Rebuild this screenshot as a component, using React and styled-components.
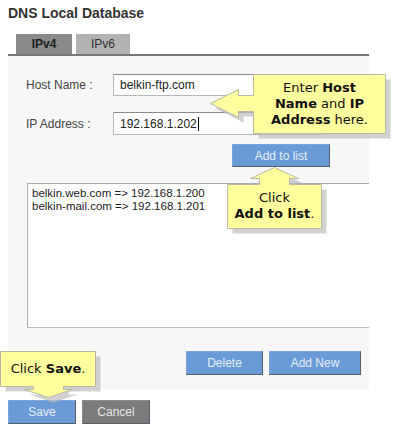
import React from 'react';
import styled, { createGlobalStyle } from 'styled-components';

const GlobalStyle = createGlobalStyle`
    body {
        margin: 0;
        background: #ffffff;
        font-family: 'Liberation Sans', Arial, sans-serif;
    }
`;

// 전체 페이지
const Page = styled.div`
    position: relative;
    box-sizing: border-box;
    width: 393px;
    height: 435px;
    padding-left: 8px;
    overflow: hidden;
    background: #ffffff;
`;

const Title = styled.h1`
    margin: 0;
    padding-top: 5px;
    font-size: 14px;
    line-height: 17px;
    font-weight: bold;
    color: #333333;
`;

// 탭
const TabRow = styled.div`
    display: flex;
    gap: 4px;
    width: 361px;
    margin-top: 12px;
    padding-left: 8px;
    box-sizing: border-box;
    border-bottom: 2px solid #777777;
`;

const Tab = styled.div`
    width: ${p => p.$w}px;
    height: 20px;
    display: flex;
    align-items: center;
    justify-content: center;
    font-size: 12px;
    font-weight: ${p => (p.$active ? 'bold' : 'normal')};
    color: ${p => (p.$active ? '#1e1e1e' : '#333333')};
    background: ${p => (p.$active ? '#8a8a8a' : '#b2b2b2')};
`;

// 회색 패널
const Panel = styled.div`
    box-sizing: border-box;
    width: 361px;
    height: 333px;
    padding: 18px 0 14px 18px;
    background: #f7f7f7;
    overflow: hidden;
    display: flex;
    flex-direction: column;
`;

const FormGrid = styled.div`
    display: grid;
    grid-template-columns: 87px 213px;
    row-gap: 16px;
    align-items: center;
`;

const Label = styled.label`
    font-size: 12px;
    color: #444444;
`;

const Field = styled.div`
    box-sizing: border-box;
    height: ${p => p.$h}px;
    display: flex;
    align-items: center;
    padding-left: 6px;
    background: #ffffff;
    border: 1px solid #b4b8bd;
    border-top-color: #8a8a8a;
    font-size: 12px;
    color: #222222;
`;

const Caret = styled.span`
    display: inline-block;
    width: 1px;
    height: 14px;
    margin-left: 1px;
    background: #000000;
`;

const Button = styled.button`
    box-sizing: border-box;
    width: ${p => p.$w}px;
    height: ${p => p.$h || 24}px;
    margin: 0;
    padding: 0;
    font-family: 'Liberation Sans', Arial, sans-serif;
    font-size: 12px;
    color: ${p => (p.$tone === 'gray' ? '#e4e4e4' : '#e6eef8')};
    background: ${p => (p.$tone === 'gray' ? '#7b7b7b' : '#6b9bd7')};
    border: 1px solid ${p => (p.$tone === 'gray' ? '#8c8c8c' : '#7aa6dc')};
    border-right-color: #55606c;
    border-bottom-color: #55606c;
    cursor: pointer;
`;

const AddRow = styled.div`
    margin-top: 9px;
    padding-left: 206px;
`;

const ListBox = styled.div`
    box-sizing: border-box;
    flex: none;
    width: 362px;
    height: 145px;
    margin: 16px 0 0 1px;
    padding: 3px 4px;
    background: #ffffff;
    border: 1px solid #a4abb8;
    border-bottom-color: #b8bcc4;
    font-size: 11.5px;
    line-height: 13px;
    color: #222222;
`;

const ListItem = styled.div`
    white-space: nowrap;
`;

const ActionRow = styled.div`
    display: flex;
    justify-content: flex-end;
    gap: 6px;
    margin-top: 23px;
    padding-right: 8px;
`;

const FooterRow = styled.div`
    display: flex;
    gap: 6px;
    margin-top: 11px;
`;

// 말풍선 안내
const Callout = styled.div`
    position: absolute;
    left: ${p => p.$x}px;
    top: ${p => p.$y}px;
    width: ${p => p.$w}px;
    height: ${p => p.$h}px;
`;

const CalloutShape = styled.svg`
    position: absolute;
    left: 0;
    top: 0;
    overflow: visible;
`;

const CalloutText = styled.div`
    position: absolute;
    left: ${p => p.$x}px;
    top: ${p => p.$y}px;
    width: ${p => p.$w}px;
    height: ${p => p.$h}px;
    display: flex;
    flex-direction: column;
    justify-content: center;
    align-items: center;
    text-align: center;
    font-family: 'DejaVu Sans', Verdana, sans-serif;
    font-size: 13px;
    line-height: 16px;
    color: #111111;
    white-space: nowrap;

    b {
        font-weight: bold;
    }
`;

const Bubble = ({ x, y, w, h, points, box, children }) => (
    <Callout $x={x} $y={y} $w={w} $h={h}>
        <CalloutShape width={w} height={h}>
            <polygon points={points} fill="#bdbdbd" transform="translate(5 5)" opacity="0.7" />
            <polygon points={points} fill="#ffff9e" stroke="#b9b9a4" strokeWidth="1" />
        </CalloutShape>
        <CalloutText $x={box[0]} $y={box[1]} $w={box[2]} $h={box[3]}>
            {children}
        </CalloutText>
    </Callout>
);

const App = () => {
    return (
        <Page>
            <GlobalStyle />
            <Title>DNS Local Database</Title>
            <TabRow>
                <Tab $active $w={56}>IPv4</Tab>
                <Tab $w={54}>IPv6</Tab>
            </TabRow>
            <Panel>
                <FormGrid>
                    <Label>Host Name :</Label>
                    <Field $h={22}>belkin-ftp.com</Field>
                    <Label>IP Address :</Label>
                    <Field $h={23}>192.168.1.202<Caret /></Field>
                </FormGrid>
                <AddRow>
                    <Button $w={98} $h={23}>Add to list</Button>
                </AddRow>
                <ListBox>
                    <ListItem>belkin.web.com =&gt; 192.168.1.200</ListItem>
                    <ListItem>belkin-mail.com =&gt; 192.168.1.201</ListItem>
                </ListBox>
                <ActionRow>
                    <Button $w={77}>Delete</Button>
                    <Button $w={92}>Add New</Button>
                </ActionRow>
            </Panel>
            <FooterRow>
                <Button $w={68}>Save</Button>
                <Button $w={68} $tone="gray">Cancel</Button>
            </FooterRow>

            <Bubble
                x={205} y={70} w={186} h={72}
                points="48.5,4.5 180.5,4.5 180.5,63.5 48.5,63.5 48.5,41.5 33.5,41.5 33.5,47.5 5.5,33.5 33.5,19.5 33.5,25.5 48.5,25.5"
                box={[48, 4, 133, 60]}
            >
                <div>Enter <b>Host</b></div>
                <div><b>Name</b> and <b>IP</b></div>
                <div><b>Address</b> here.</div>
            </Bubble>

            <Bubble
                x={222} y={164} w={110} h={72}
                points="52.5,3.5 76.5,14.5 67.5,14.5 67.5,20.5 99.5,20.5 99.5,64.5 5.5,64.5 5.5,20.5 37.5,20.5 37.5,14.5 28.5,14.5"
                box={[5, 20, 95, 44]}
            >
                <div>Click</div>
                <div><b>Add to list</b>.</div>
            </Bubble>

            <Bubble
                x={0} y={348} w={104} h={54}
                points="0.5,3.5 95.5,3.5 95.5,38.5 63.5,38.5 63.5,41.5 72.5,41.5 48.5,49.5 24.5,41.5 33.5,41.5 33.5,38.5 0.5,38.5"
                box={[0, 3, 96, 36]}
            >
                <div>Click <b>Save</b>.</div>
            </Bubble>
        </Page>
    );
};

export default App;
